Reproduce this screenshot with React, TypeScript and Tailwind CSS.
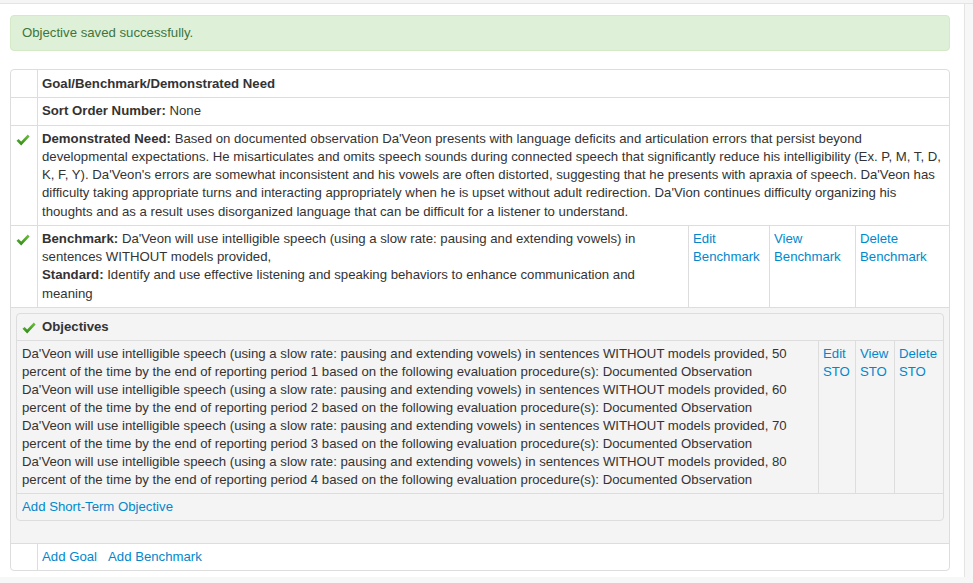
import React from "react";

const Check = () => (
  <svg width="14" height="12" viewBox="0 0 14 12" className="block">
    <defs>
      <linearGradient id="chk" x1="0" y1="0" x2="0" y2="1">
        <stop offset="0" stopColor="#6fc13f" />
        <stop offset="1" stopColor="#2f8a17" />
      </linearGradient>
    </defs>
    <path d="M0.5 6.8 L2.6 4.9 L5.2 7.4 L11.8 0.6 L13.6 2.4 L5.2 11.4 Z" fill="url(#chk)" />
  </svg>
);

const link = "text-[#0088cc] hover:underline cursor-pointer";

const objectives = [50, 60, 70, 80];

export default function App() {
  return (
    <div
      className="w-[973px] h-[583px] bg-[#f7f7f7] flex flex-col overflow-hidden text-[13.2px] text-[#333]"
      style={{ fontFamily: '"Helvetica Neue", Helvetica, "Liberation Sans", Arial, sans-serif' }}
    >
      <div className="h-[4px] shrink-0 bg-[#f5f5f5] border-b border-[#e4e4e4]" />
      <div className="flex">
        <div className="w-[965px] bg-white border-r border-[#e4e4e4] pt-[11px] pl-[10px] pr-[14px] pb-[6px]">
          {/* Alert */}
          <div className="mb-[18px] rounded-[4px] border border-[#d6e9c6] bg-[#dff0d8] text-[#3c763d] px-[11px] py-[8px] leading-[18px]">
            Objective saved successfully.
          </div>

          {/* Goal table */}
          <div className="border border-[#ddd] rounded-[4px] overflow-hidden leading-[18.25px]">
            <div className="flex">
              <div className="w-[27px] shrink-0 border-r border-[#ddd]" />
              <div className="flex-1 px-[4px] pt-[5px] pb-[4px] font-bold">Goal/Benchmark/Demonstrated Need</div>
            </div>
            <div className="flex border-t border-[#ddd]">
              <div className="w-[27px] shrink-0 border-r border-[#ddd]" />
              <div className="flex-1 px-[4px] py-[4px]">
                <b>Sort Order Number:</b> None
              </div>
            </div>
            <div className="flex border-t border-[#ddd]">
              <div className="w-[27px] shrink-0 border-r border-[#ddd] pl-[5px] pt-[8px]">
                <Check />
              </div>
              <div className="flex-1 px-[4px] py-[4px]">
                <b>Demonstrated Need:</b> Based on documented observation Da'Veon presents with language deficits and
                articulation errors that persist beyond developmental expectations. He misarticulates and omits speech
                sounds during connected speech that significantly reduce his intelligibility (Ex. P, M, T, D, K, F, Y).
                Da'Veon's errors are somewhat inconsistent and his vowels are often distorted, suggesting that he
                presents with apraxia of speech. Da'Veon has difficulty taking appropriate turns and interacting
                appropriately when he is upset without adult redirection. Da'Vion continues difficulty organizing his
                thoughts and as a result uses disorganized language that can be difficult for a listener to understand.
              </div>
            </div>
            <div className="flex border-t border-[#ddd]">
              <div className="w-[27px] shrink-0 border-r border-[#ddd] pl-[5px] pt-[8px]">
                <Check />
              </div>
              <div className="flex-1 px-[4px] py-[4px]">
                <div>
                  <b>Benchmark:</b> Da'Veon will use intelligible speech (using a slow rate: pausing and extending
                  vowels) in sentences WITHOUT models provided,
                </div>
                <div>
                  <b>Standard:</b> Identify and use effective listening and speaking behaviors to enhance communication
                  and meaning
                </div>
              </div>
              <div className="w-[81px] shrink-0 border-l border-[#ddd] px-[4px] py-[4px]">
                <span className={link}>Edit Benchmark</span>
              </div>
              <div className="w-[86px] shrink-0 border-l border-[#ddd] px-[4px] py-[4px]">
                <span className={link}>View Benchmark</span>
              </div>
              <div className="w-[94px] shrink-0 border-l border-[#ddd] px-[4px] py-[4px]">
                <span className={link}>Delete Benchmark</span>
              </div>
            </div>

            {/* Objectives */}
            <div className="border-t border-[#ddd] bg-[#f4f4f4] px-[5px] pt-[5px] pb-[4px] leading-[18px]">
              <div className="mb-[18px] border border-[#ddd] rounded-[4px] bg-[#f4f4f4]">
                <div className="flex items-center gap-[6px] border-b border-[#ddd] px-[5px] py-[4px] font-bold">
                  <span className="pt-[2px]">
                    <Check />
                  </span>
                  Objectives
                </div>
                <div className="flex border-b border-[#ddd]">
                  <div className="flex-1 px-[5px] py-[4px]">
                    {objectives.map((p, i) => (
                      <div key={p}>
                        Da'Veon will use intelligible speech (using a slow rate: pausing and extending vowels) in
                        sentences WITHOUT models provided, {p} percent of the time by the end of reporting period{" "}
                        {i + 1} based on the following evaluation procedure(s): Documented Observation
                      </div>
                    ))}
                  </div>
                  <div className="w-[37px] shrink-0 border-l border-[#ddd] px-[4px] py-[4px]">
                    <span className={link}>Edit STO</span>
                  </div>
                  <div className="w-[39px] shrink-0 border-l border-[#ddd] px-[4px] py-[4px]">
                    <span className={link}>View STO</span>
                  </div>
                  <div className="w-[49px] shrink-0 border-l border-[#ddd] px-[4px] py-[4px]">
                    <span className={link}>Delete STO</span>
                  </div>
                </div>
                <div className="px-[5px] py-[4px]">
                  <span className={link}>Add Short-Term Objective</span>
                </div>
              </div>
            </div>

            <div className="flex border-t border-[#ddd] leading-[18px]">
              <div className="w-[27px] shrink-0 border-r border-[#ddd]" />
              <div className="flex-1 px-[4px] py-[4px] flex gap-[11px]">
                <span className={link}>Add Goal</span>
                <span className={link}>Add Benchmark</span>
              </div>
            </div>
          </div>
        </div>
      </div>
    </div>
  );
}
